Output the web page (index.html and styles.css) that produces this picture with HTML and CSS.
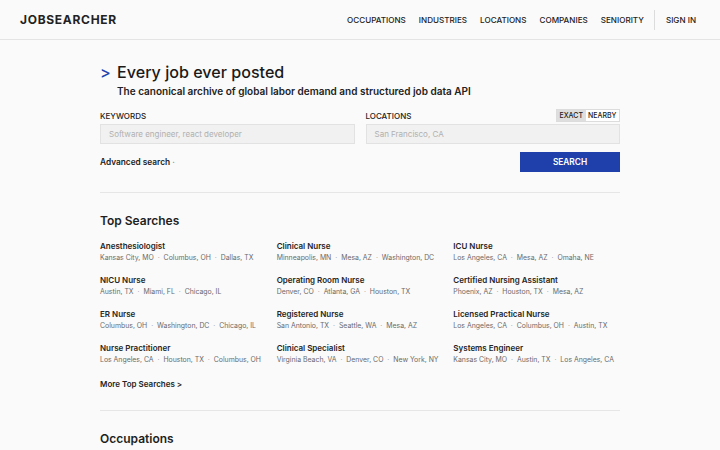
FILE: index.html
```html
<!DOCTYPE html>
<html>
<head>
<title>JobSearcher</title>
<link rel="stylesheet" href="styles.css">
</head>
<body>
  <header class="topbar">
    <div class="logo">JOBSEARCHER</div>
    <nav class="nav">
      <a href="#">OCCUPATIONS</a>
      <a href="#">INDUSTRIES</a>
      <a href="#">LOCATIONS</a>
      <a href="#">COMPANIES</a>
      <a href="#">SENIORITY</a>
      <span class="nav-sep"></span>
      <a href="#">SIGN IN</a>
    </nav>
  </header>

  <main class="container">
    <section class="hero">
      <h1><span class="caret">&gt;</span> Every job ever posted</h1>
      <p class="tagline">The canonical archive of global labor demand and structured job data API</p>

      <div class="search-fields">
        <div class="field">
          <div class="field-head">
            <label>KEYWORDS</label>
          </div>
          <div class="input">Software engineer, react developer</div>
        </div>
        <div class="field">
          <div class="field-head">
            <label>LOCATIONS</label>
            <div class="toggle">
              <span class="on">EXACT</span>
              <span>NEARBY</span>
            </div>
          </div>
          <div class="input">San Francisco, CA</div>
        </div>
      </div>

      <div class="search-actions">
        <a class="advanced" href="#">Advanced search <span class="dot">&middot;</span></a>
        <button class="search-button">SEARCH</button>
      </div>
    </section>

    <section class="block">
      <h2>Top Searches</h2>
      <div class="grid">
        <div class="item"><div class="title">Anesthesiologist</div><div class="places">Kansas City, MO <i>&middot;</i> Columbus, OH <i>&middot;</i> Dallas, TX</div></div>
        <div class="item"><div class="title">Clinical Nurse</div><div class="places">Minneapolis, MN <i>&middot;</i> Mesa, AZ <i>&middot;</i> Washington, DC</div></div>
        <div class="item"><div class="title">ICU Nurse</div><div class="places">Los Angeles, CA <i>&middot;</i> Mesa, AZ <i>&middot;</i> Omaha, NE</div></div>
        <div class="item"><div class="title">NICU Nurse</div><div class="places">Austin, TX <i>&middot;</i> Miami, FL <i>&middot;</i> Chicago, IL</div></div>
        <div class="item"><div class="title">Operating Room Nurse</div><div class="places">Denver, CO <i>&middot;</i> Atlanta, GA <i>&middot;</i> Houston, TX</div></div>
        <div class="item"><div class="title">Certified Nursing Assistant</div><div class="places">Phoenix, AZ <i>&middot;</i> Houston, TX <i>&middot;</i> Mesa, AZ</div></div>
        <div class="item"><div class="title">ER Nurse</div><div class="places">Columbus, OH <i>&middot;</i> Washington, DC <i>&middot;</i> Chicago, IL</div></div>
        <div class="item"><div class="title">Registered Nurse</div><div class="places">San Antonio, TX <i>&middot;</i> Seattle, WA <i>&middot;</i> Mesa, AZ</div></div>
        <div class="item"><div class="title">Licensed Practical Nurse</div><div class="places">Los Angeles, CA <i>&middot;</i> Columbus, OH <i>&middot;</i> Austin, TX</div></div>
        <div class="item"><div class="title">Nurse Practitioner</div><div class="places">Los Angeles, CA <i>&middot;</i> Houston, TX <i>&middot;</i> Columbus, OH</div></div>
        <div class="item"><div class="title">Clinical Specialist</div><div class="places">Virginia Beach, VA <i>&middot;</i> Denver, CO <i>&middot;</i> New York, NY</div></div>
        <div class="item"><div class="title">Systems Engineer</div><div class="places">Kansas City, MO <i>&middot;</i> Austin, TX <i>&middot;</i> Los Angeles, CA</div></div>
      </div>
      <a class="more" href="#">More Top Searches &gt;</a>
    </section>

    <section class="block">
      <h2>Occupations</h2>
    </section>
  </main>
</body>
</html>
```

FILE: styles.css
```css
body {
  margin: 0;
  background-color: #fafafa;
  color: #1f1f1f;
  font-family: Inter, "Noto Sans", sans-serif;
}

a {
  color: inherit;
  text-decoration: none;
}

.topbar {
  height: 39px;
  border-bottom: 1px solid #e4e4e4;
  display: flex;
  align-items: center;
  justify-content: space-between;
  padding: 0 24px 0 20px;
}

.logo {
  font-size: 12px;
  font-weight: 700;
  letter-spacing: 0.7px;
  color: #222;
}

.nav {
  display: flex;
  align-items: center;
  gap: 13px;
  font-size: 8.1px;
  font-weight: 500;
  color: #222;
}

.nav-sep {
  width: 1px;
  height: 20px;
  background-color: #dcdcdc;
  margin: 0 -2px 0 -3px;
}

.container {
  width: 520px;
  margin: 0 auto;
}

.hero {
  padding-top: 21px;
  padding-bottom: 20px;
  border-bottom: 1px solid #e6e6e6;
}

h1 {
  margin: 0;
  font-size: 16.1px;
  font-weight: 500;
  color: #1a1a1a;
  line-height: 22px;
}

.caret {
  color: #2341b0;
  margin-right: 2px;
}

.tagline {
  margin: 0 0 0 17px;
  font-size: 10px;
  font-weight: 600;
  line-height: 16px;
  color: #222;
}

.search-fields {
  display: flex;
  gap: 11px;
  margin-top: 8px;
}

.field {
  flex: 1;
}

.field-head {
  display: flex;
  justify-content: space-between;
  align-items: flex-end;
  height: 15px;
  margin-bottom: 2px;
}

.field-head label {
  font-size: 8px;
  font-weight: 500;
  color: #222;
  line-height: 12px;
}

.toggle {
  display: flex;
  border: 1px solid #dcdcdc;
  font-size: 7px;
  font-weight: 500;
  color: #222;
  line-height: 11px;
}

.toggle span {
  padding: 0 2.5px;
  background-color: #fff;
}

.toggle .on {
  background-color: #dedede;
}

.input {
  height: 18px;
  border: 1px solid #e2e2e2;
  background-color: #f1f1f1;
  font-size: 8px;
  color: #b0b0b0;
  line-height: 18px;
  padding: 0 8px;
}

.search-actions {
  display: flex;
  justify-content: space-between;
  align-items: center;
  margin-top: 8px;
}

.advanced {
  font-size: 8.3px;
  font-weight: 600;
  color: #222;
}

.advanced .dot {
  color: #888;
}

.search-button {
  width: 100px;
  height: 20px;
  border: none;
  background-color: #1f3fab;
  color: #fff;
  font-family: inherit;
  font-size: 8.3px;
  font-weight: 600;
}

.block {
  padding-top: 20px;
}

h2 {
  margin: 0;
  font-size: 12px;
  font-weight: 600;
  color: #1f1f1f;
  line-height: 16px;
}

.grid {
  display: grid;
  grid-template-columns: repeat(3, 1fr);
  column-gap: 10px;
  row-gap: 11px;
  margin-top: 11px;
}

.title {
  font-size: 8px;
  font-weight: 600;
  color: #252525;
  line-height: 12px;
}

.places {
  font-size: 6.9px;
  color: #6a6a6a;
  line-height: 11px;
}

.places i {
  font-style: normal;
  color: #aaa;
  margin: 0 2px;
}

.more {
  display: block;
  margin-top: 14px;
  padding-bottom: 21px;
  border-bottom: 1px solid #e6e6e6;
  font-size: 8px;
  font-weight: 600;
  color: #252525;
}
```
